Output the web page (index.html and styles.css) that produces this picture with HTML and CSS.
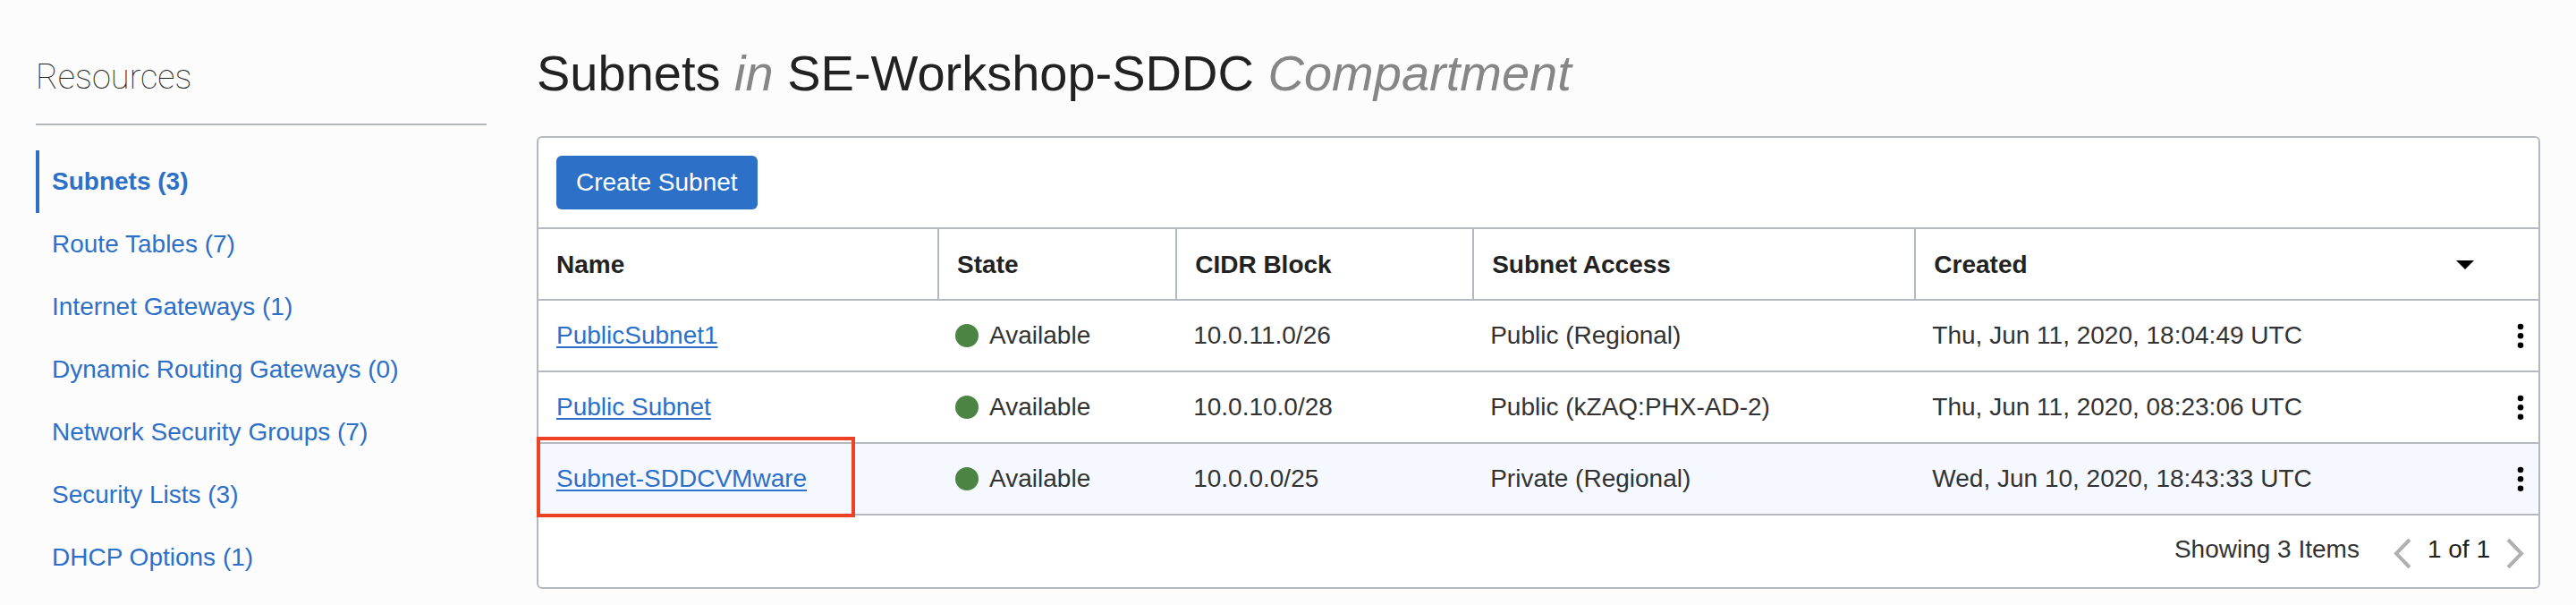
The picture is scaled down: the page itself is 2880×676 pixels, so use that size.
FILE: index.html
```html
<!DOCTYPE html>
<html lang="en">
<head>
<meta charset="utf-8">
<title>Subnets</title>
<link rel="stylesheet" href="styles.css">
</head>
<body>
<div class="page">
  <aside class="sidebar">
    <h2 class="sidebar-title">Resources</h2>
    <nav class="resource-nav" aria-label="Resources">
      <a class="resource-link is-active" href="#subnets" aria-current="page">Subnets (3)</a>
      <a class="resource-link" href="#route-tables">Route Tables (7)</a>
      <a class="resource-link" href="#internet-gateways">Internet Gateways (1)</a>
      <a class="resource-link" href="#dynamic-routing-gateways">Dynamic Routing Gateways (0)</a>
      <a class="resource-link" href="#network-security-groups">Network Security Groups (7)</a>
      <a class="resource-link" href="#security-lists">Security Lists (3)</a>
      <a class="resource-link" href="#dhcp-options">DHCP Options (1)</a>
    </nav>
  </aside>
  <main class="content">
    <h1 class="title">Subnets <em>in</em> SE-Workshop-SDDC <em>Compartment</em></h1>
    <section class="card">
      <div class="toolbar"><button class="create-button" type="button">Create Subnet</button></div>
      <table class="subnets">
        <colgroup>
          <col class="col-name"><col class="col-state"><col class="col-cidr"><col class="col-access"><col><col class="col-actions">
        </colgroup>
        <thead>
          <tr>
            <th scope="col">Name</th>
            <th scope="col">State</th>
            <th scope="col">CIDR Block</th>
            <th scope="col">Subnet Access</th>
            <th scope="col" colspan="2">
              <div class="sortable">Created
                <button class="icon-button" type="button" aria-label="Sort by created"><svg width="20" height="10" viewBox="0 0 20 10"><path d="M0 0h20L10 10z"/></svg></button>
              </div>
            </th>
          </tr>
        </thead>
        <tbody>
          <tr>
            <td><a class="subnet-link" href="#publicsubnet1">PublicSubnet1</a></td>
            <td><span class="state">Available</span></td>
            <td>10.0.11.0/26</td>
            <td>Public (Regional)</td>
            <td>Thu, Jun 11, 2020, 18:04:49 UTC</td>
            <td class="actions"><button class="icon-button" type="button" aria-label="Actions"><svg width="8" height="28" viewBox="0 0 8 28"><circle cx="4" cy="4" r="3.3"/><circle cx="4" cy="14.3" r="3.3"/><circle cx="4" cy="24.7" r="3.3"/></svg></button></td>
          </tr>
          <tr>
            <td><a class="subnet-link" href="#public-subnet">Public Subnet</a></td>
            <td><span class="state">Available</span></td>
            <td>10.0.10.0/28</td>
            <td>Public (kZAQ:PHX-AD-2)</td>
            <td>Thu, Jun 11, 2020, 08:23:06 UTC</td>
            <td class="actions"><button class="icon-button" type="button" aria-label="Actions"><svg width="8" height="28" viewBox="0 0 8 28"><circle cx="4" cy="4" r="3.3"/><circle cx="4" cy="14.3" r="3.3"/><circle cx="4" cy="24.7" r="3.3"/></svg></button></td>
          </tr>
          <tr class="is-hovered">
            <td class="marked"><a class="subnet-link" href="#subnet-sddcvmware">Subnet-SDDCVMware</a><span class="marker"></span></td>
            <td><span class="state">Available</span></td>
            <td>10.0.0.0/25</td>
            <td>Private (Regional)</td>
            <td>Wed, Jun 10, 2020, 18:43:33 UTC</td>
            <td class="actions"><button class="icon-button" type="button" aria-label="Actions"><svg width="8" height="28" viewBox="0 0 8 28"><circle cx="4" cy="4" r="3.3"/><circle cx="4" cy="14.3" r="3.3"/><circle cx="4" cy="24.7" r="3.3"/></svg></button></td>
          </tr>
        </tbody>
      </table>
      <footer class="footer">
        <span>Showing 3 Items</span>
        <div class="pager">
          <button class="icon-button pager-button" type="button" aria-label="Previous page"><svg width="20" height="34" viewBox="0 0 20 34"><path d="M18 2 3 17.500 18 33"/></svg></button>
          <span class="pager-text">1 of 1</span>
          <button class="icon-button pager-button" type="button" aria-label="Next page"><svg width="20" height="34" viewBox="0 0 20 34"><path d="M2 2l15 15.500L2 33"/></svg></button>
        </div>
      </footer>
    </section>
  </main>
</div>
</body>
</html>
```
FILE: styles.css
```css
* {
  box-sizing: border-box;
}

body {
  margin: 0;
  background: #fcfcfc;
  color: #333;
  font-family: "Liberation Sans", Arial, sans-serif;
  font-size: 28px;
  line-height: 32px;
}

.page {
  display: grid;
  grid-template-columns: 18% 1fr;
  column-gap: 56px;
  padding: 50px 40px 16px;
}

.sidebar-title {
  margin: 0 0 28px;
  padding: 12px 0 28px;
  border-bottom: 2px solid #b4b8bf;
  color: #222;
  font-family: Roboto, sans-serif;
  font-size: 38px;
  font-weight: 100;
  line-height: 48px;
}

.resource-nav {
  display: flex;
  flex-direction: column;
}

.resource-link {
  padding-left: 14px;
  border-left: 4px solid transparent;
  color: #2d70c8;
  line-height: 70px;
  text-decoration: none;
}

.resource-link.is-active {
  border-left-color: #2d70c8;
  font-weight: bold;
}

.title {
  margin: 0 0 38px;
  color: #222;
  font-size: 56px;
  font-weight: normal;
  line-height: 64px;
}

.title em {
  color: #868686;
}

.card {
  border: 2px solid #b4b8bf;
  border-radius: 6px;
  background: #fff;
}

.toolbar {
  display: flex;
  padding: 20px;
}

.create-button {
  height: 60px;
  padding: 0 22px;
  border: 0;
  border-radius: 6px;
  background: #2d70c8;
  color: #fff;
  font: inherit;
}

.subnets {
  width: 100%;
  border-spacing: 0;
  table-layout: fixed;
}

.col-name {
  width: 19.95%;
}

.col-state {
  width: 11.9%;
}

.col-cidr {
  width: 14.85%;
}

.col-access {
  width: 22.1%;
}

.col-actions {
  width: 52px;
}

.subnets th,
.subnets td {
  height: 80px;
  padding: 0 20px;
  border-bottom: 2px solid #b4b8bf;
  text-align: left;
  white-space: nowrap;
}

.subnets th {
  height: 82px;
  padding-top: 2px;
  border-top: 2px solid #b4b8bf;
  color: #222;
}

.subnets th + th {
  border-left: 2px solid #b4b8bf;
}

.is-hovered {
  background: #f5f9ff;
}

.subnet-link {
  color: #2d70c8;
  text-decoration-thickness: 2px;
  text-underline-offset: 3px;
}

.sortable {
  display: flex;
  align-items: center;
  justify-content: space-between;
  padding-right: 52px;
}

.state {
  display: flex;
  align-items: center;
  gap: 12px;
}

.state::before {
  width: 26px;
  height: 26px;
  border-radius: 50%;
  background: #4b8443;
  content: "";
}

.icon-button {
  display: flex;
  padding: 0;
  border: 0;
  background: none;
  color: #000;
}

.subnets .actions {
  padding: 0 16px 0 28px;
}

.marked {
  position: relative;
}

.marker {
  position: absolute;
  top: -8px;
  left: -2px;
  width: 356px;
  height: 90px;
  border: 4px solid #ee4225;
  pointer-events: none;
}

.footer {
  display: flex;
  align-items: center;
  justify-content: flex-end;
  gap: 38px;
  height: 80px;
  padding: 0 16px 4px;
}

.pager {
  display: flex;
  align-items: center;
  gap: 18px;
}

.pager-text {
  color: #222;
}

.pager-button {
  padding-top: 8px;
}

.pager-button path {
  fill: none;
  stroke: #b0b0b0;
  stroke-width: 4;
}
```
